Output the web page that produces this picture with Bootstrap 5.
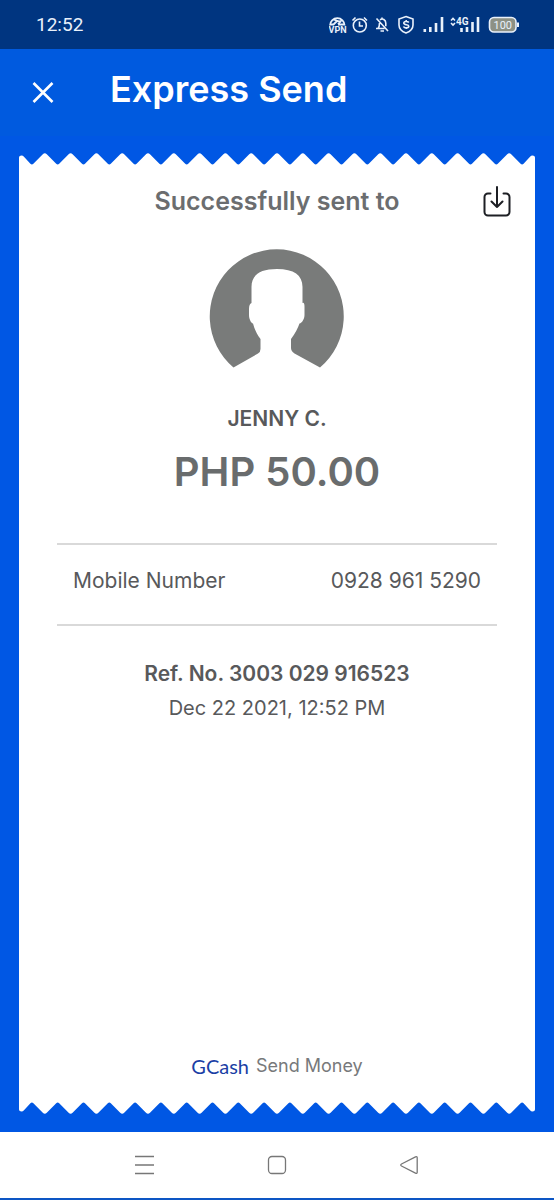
<!DOCTYPE html>
<html lang="en">
<head>
<meta charset="utf-8">
<meta name="viewport" content="width=device-width, initial-scale=1">
<title>Express Send</title>
<link href="https://cdn.jsdelivr.net/npm/bootstrap@5.3.0/dist/css/bootstrap.min.css" rel="stylesheet">
<style>
  body { font-family: Inter, "Open Sans", sans-serif; background: #0057e4; color: #58595b; }
  svg { display: block; flex: none; }
  .status-bar { background: #003580; color: #e9f1fb; min-height: 49px; padding: 0 35px 0 36px; }
  .clock { font: 19px/24px Roboto, sans-serif; }
  .app-bar { background: #005adf; min-height: 87px; padding: 0 30px; }
  .app-title { font-size: 36px; line-height: 44px; font-weight: 600; margin: 0 0 8px 54px; }
  .icon-btn { border: 0; background: none; padding: 0; color: inherit; }
  .receipt-wrap { padding: 17px 19px 18px; }
  .edge { width: 100%; height: 12px; }
  .receipt-body { padding: 20px 38px 23px; }
  .save-btn { top: 20px; right: 23px; color: #1d1f24; }
  .sent-label { font-size: 25px; line-height: 32px; font-weight: 600; color: #6b6d6f; }
  .avatar { margin: 32px auto 36px; }
  .payee { font-size: 21px; line-height: 30px; font-weight: 600; }
  .amount { font-size: 40px; line-height: 56px; font-weight: 600; color: #696c6d; margin: 10px 0 43px; }
  .detail-row { border: solid #d9d9d9; border-width: 2px 0; padding: 22px 16px 29px; font-size: 21px; line-height: 28px; }
  .ref-no { font-size: 21px; line-height: 32px; font-weight: 600; margin: 32px 0 4px; }
  .sent-date { font-size: 20px; line-height: 28px; }
  .brand { font-size: 18px; line-height: 24px; color: #77797b; gap: 7px; }
  .wordmark { font: 20px/26px Lato, sans-serif; color: #1b3fa5; }
  .nav-keys { min-height: 68px; color: #777; border-bottom: 2px solid #0d56c4; padding: 0 134px; }
</style>
</head>
<body>
<div class="d-flex flex-column min-vh-100">
  <div class="status-bar d-flex align-items-center justify-content-between">
    <span class="clock">12:52</span>
    <div class="d-flex align-items-center">
      <svg width="190" height="24" viewBox="329 13 190 24" fill="none" stroke="currentColor" stroke-width="1.6" role="img" aria-label="VPN, alarm, muted, secured, signal, 4G, battery 100">
        <!-- vpn globe -->
        <path stroke-width="1.800" d="M330 25.500a7.300 7.300 0 0 1 14.600 0M330 24.500h3.500l3.500-3.500M338 24.500h6.600M333.500 19.500l6 2 3-1.500M338 24l3-3"/>
        <text x="328.500" y="33" font-family="Roboto, sans-serif" font-size="9" font-weight="700" fill="currentColor" stroke="none">VPN</text>
        <!-- alarm -->
        <circle cx="359.800" cy="25.500" r="6.500"/><path d="M359.500 21.500v4.500h3.500M352.500 20.500l3-3M367 20.500l-3-3"/>
        <!-- muted bell -->
        <path d="M376.500 18.500l11.500 12.500M376 28.500h8.500M378 28.500c1.500-1.500 1.500-3 1.500-5.500M380 19.800c2.500-2 5.800 0 5.800 3.500v3M382 17.500v1.500M380.500 31h3.500"/>
        <!-- shield -->
        <path d="M406 16.500l7 2.500v6c0 4-3 6.500-7 8-4-1.500-7-4-7-8v-6z"/>
        <path d="M408.800 22.500c-1-1.500-5-1.500-5 .5 0 2.500 5 1 5 3.300 0 2.200-4.500 2-5.300.2M406.200 20v1.500M406.200 27.500v1.500"/>
        <!-- signal bars -->
        <path stroke-width="2.600" d="M424.800 32v-3M430.300 32v-5M436 32v-9M442 32v-15M461.500 32v-4M467 32v-5M472.500 32v-10M478 32v-15"/>
        <path d="M451 20.500l2-2 2 2M451 23l2 2 2-2"/>
        <text x="456" y="25" font-family="Roboto, sans-serif" font-size="10" font-weight="700" fill="currentColor" stroke="none">4G</text>
        <!-- battery -->
        <rect x="489.500" y="17.500" width="26.500" height="14.500" rx="4.500" fill="#8d9185"/>
        <path stroke-width="2" d="M518 22.500v4.500"/>
        <text x="493.500" y="28.500" font-family="Roboto, sans-serif" font-size="11" fill="currentColor" stroke="none">100</text>
      </svg>
    </div>
  </div>

  <header class="app-bar d-flex align-items-center text-white">
    <button class="icon-btn" type="button" aria-label="Close">
      <svg width="26" height="26" viewBox="0 0 26 26" fill="none" stroke="currentColor" stroke-width="2.600"><path d="M3.500 3l19 19M22.500 3l-19 19"/></svg>
    </button>
    <h1 class="app-title">Express Send</h1>
  </header>

  <main class="receipt-wrap flex-grow-1 d-flex flex-column">
    <svg class="edge" viewBox="0 0 520 12" preserveAspectRatio="none" fill="#fff"><path id="teeth" d="M0 12.500V4.500Q0 2.500 2.500 2.500Q4 2.500 5 3.800L11.500 10.800q1.500 1.400 3 0l9.500-9.600q2-2 4 0l9.500 9.600q1.500 1.400 3 0l9.500-9.600q2-2 4 0l9.500 9.600q1.500 1.400 3 0l9.500-9.600q2-2 4 0l9.500 9.600q1.500 1.400 3 0l9.500-9.600q2-2 4 0l9.500 9.600q1.500 1.400 3 0l9.500-9.600q2-2 4 0l9.500 9.600q1.500 1.400 3 0l9.500-9.600q2-2 4 0l9.500 9.600q1.500 1.400 3 0l9.500-9.600q2-2 4 0l9.500 9.600q1.500 1.400 3 0l9.500-9.600q2-2 4 0l9.500 9.600q1.500 1.400 3 0l9.500-9.600q2-2 4 0l9.500 9.600q1.500 1.400 3 0l9.500-9.600q2-2 4 0l9.500 9.600q1.500 1.400 3 0l9.500-9.600q2-2 4 0l9.500 9.600q1.500 1.400 3 0l9.500-9.600q2-2 4 0l9.500 9.600q1.500 1.400 3 0l9.500-9.600q2-2 4 0l9.500 9.600q1.500 1.400 3 0l9.500-9.600q2-2 4 0l9.500 9.600q1.500 1.400 3 0l9.500-9.600q2-2 4 0l9.500 9.600q1.500 1.400 3 0l9.500-9.600q2-2 4 0l9.500 9.600q1.500 1.400 3 0l9.500-9.600q2-2 4 0l9.500 9.600q1.500 1.400 3 0l9.500-9.600q2-2 4 0l9.500 9.600q1.500 1.400 3 0l9.500-9.600q2-2 4 0l9.500 9.600q1.500 1.400 3 0L515 3.800Q516 2.500 517.500 2.500Q520 2.500 520 4.500V12.500Z"/></svg>
    <section class="receipt-body bg-white flex-grow-1 d-flex flex-column text-center position-relative">
      <button class="icon-btn save-btn position-absolute" type="button" aria-label="Save receipt">
        <svg width="30" height="32" viewBox="0 0 30 32" fill="none" stroke="currentColor" stroke-width="2" stroke-linecap="round" stroke-linejoin="round"><path d="M8.500 8.500H6a3.500 3.500 0 0 0-3.500 3.500v15A3.500 3.500 0 0 0 6 30.500h18a3.500 3.500 0 0 0 3.500-3.500V12A3.500 3.500 0 0 0 24 8.500h-2.500M15 2v20M9.500 16.500l5.500 5.500 5.500-5.500"/></svg>
      </button>
      <div class="sent-label">Successfully sent to</div>
      <svg class="avatar" width="136" height="119" viewBox="0 0 136 119" role="img" aria-label="Recipient"><path fill="#797b7a" d="M24.500 118.500A67 67 0 1 1 111 118.500L85.500 104.500Q82 102 82 99V90C86 85 89 79 90.500 74.500C93 74 95.500 70 95.500 66V58Q95.500 53 93.500 54V38C93.500 26 85 20 68 20S42.500 26 42.500 38V54Q40 55 40 60V66C40 70 42 74 44 74.500C45.500 80 48 86 51.500 90V100Q51.500 103 49 104.500Z"/></svg>
      <div class="payee">JENNY C.</div>
      <div class="amount">PHP 50.00</div>
      <div class="detail-row d-flex flex-wrap justify-content-between">
        <span>Mobile Number</span><span>0928 961 5290</span>
      </div>
      <div class="ref-no">Ref. No. 3003 029 916523</div>
      <div class="sent-date">Dec 22 2021, 12:52 PM</div>
      <div class="brand mt-auto d-flex justify-content-center align-items-center"><span class="wordmark">GCash</span><span>Send Money</span></div>
    </section>
    <svg class="edge" viewBox="0 0 520 12" preserveAspectRatio="none" fill="#fff"><use href="#teeth" transform="matrix(1 0 0 -1 0 12)"/></svg>
  </main>

  <nav class="nav-keys bg-white d-flex align-items-center justify-content-between" aria-label="System keys">
    <button class="icon-btn" type="button" aria-label="Menu"><svg width="20" height="20" viewBox="0 0 20 20" fill="none" stroke="currentColor" stroke-width="1.400"><path d="M1 1.500h19M1 10h19M1 18.500h19"/></svg></button>
    <button class="icon-btn" type="button" aria-label="Home"><svg width="20" height="20" viewBox="0 0 20 20" fill="none" stroke="currentColor" stroke-width="1.300"><rect x="1.500" y="1.500" width="17" height="17" rx="3.500"/></svg></button>
    <button class="icon-btn" type="button" aria-label="Back"><svg width="20" height="20" viewBox="0 0 20 20" fill="none" stroke="currentColor" stroke-width="1.300" stroke-linejoin="round"><path d="M15.500 1.800L1.500 9Q0 10 1.500 11L15.500 18.200Q17.200 18.800 17.200 17.200V2.800Q17.200 1.200 15.500 1.800Z"/></svg></button>
  </nav>
</div>
<script src="https://cdn.jsdelivr.net/npm/bootstrap@5.3.0/dist/js/bootstrap.bundle.min.js"></script>
</body>
</html>
